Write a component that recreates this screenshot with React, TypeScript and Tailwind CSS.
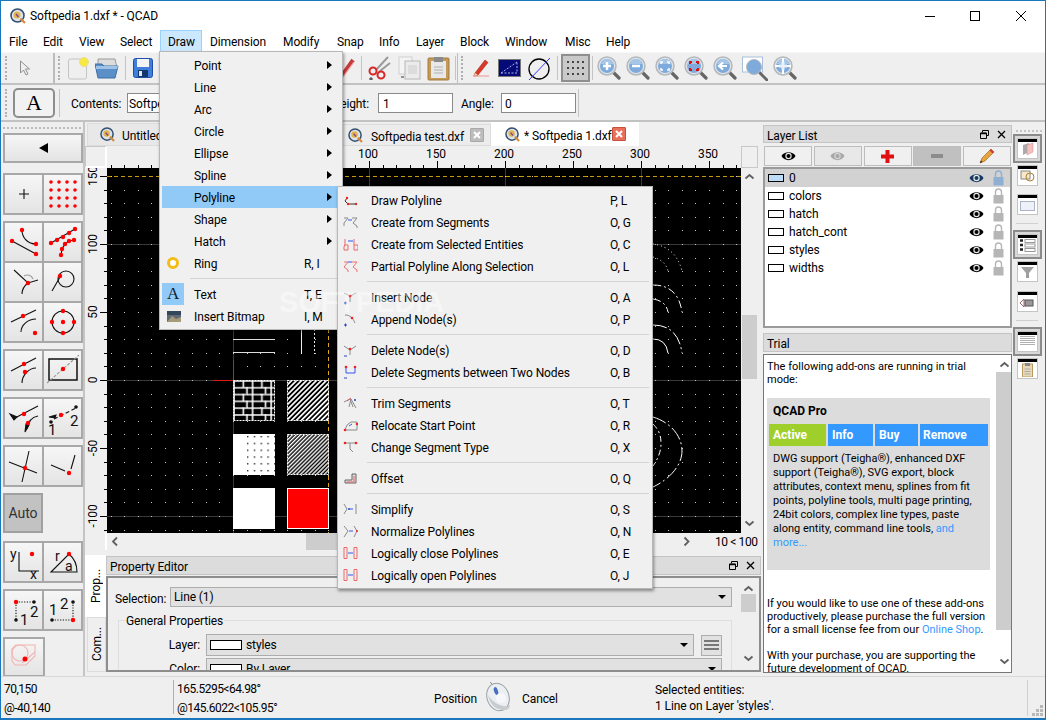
import type { ReactNode } from 'react'

const R = ({ x, y, r = 2.2 }: { x: number; y: number; r?: number }) => <circle cx={x} cy={y} r={r} fill="#f00" stroke="none" />

function Ico({ w = 34, h = 34, vb, children }: { w?: number; h?: number; vb?: string; children: ReactNode }) {
  return (
    <svg width={w} height={h} viewBox={vb ?? `0 0 ${w} ${h}`} fill="none" stroke="#111" strokeWidth="1.1" className="shrink-0">
      {children}
    </svg>
  )
}

/* ---------- small helpers ---------- */

function Handle({ className = '' }: { className?: string }) {
  return <div className={`w-[3px] h-[24px] shrink-0 border-l-2 border-dotted border-[#b0b0b0] ${className}`} />
}

function Sep({ className = '' }: { className?: string }) {
  return <div className={`w-px h-[24px] bg-[#c4c4c4] shrink-0 ${className}`} />
}

function Zoom({ children, className = '' }: { children?: ReactNode; className?: string }) {
  return (
    <svg width="24" height="24" viewBox="0 0 24 24" fill="none" className={`shrink-0 ${className}`}>
      <path d="M15 15l7 7" stroke="#666" strokeWidth="3.2" strokeLinecap="round" />
      <circle cx="10" cy="10" r="9" fill="#dfe4e8" stroke="#b4b8bc" strokeWidth="1.5" />
      <circle cx="10" cy="10" r="7" fill="#7fabdc" />
      <path d="M4 8a6 5 0 0112 0z" fill="#a6c6e8" />
      {children}
    </svg>
  )
}

function Eye({ faded = false, blue = false }: { faded?: boolean; blue?: boolean }) {
  const c = faded ? '#a8a8a8' : blue ? '#17395f' : '#000'
  return (
    <svg width="15" height="12" viewBox="0 0 15 12" className="shrink-0">
      <path d="M0.5 6C3 1 12 1 14.5 6 12 11.5 3 11.5 0.5 6z" fill={c} />
      <circle cx="7.5" cy="6" r="3.2" fill="#fff" opacity={faded ? 0.5 : 0.9} />
      <circle cx="7.5" cy="6" r="2" fill={c} />
    </svg>
  )
}

function Lock({ blue = false }: { blue?: boolean }) {
  const c = blue ? '#8fb0d2' : '#b6b6b6'
  return (
    <svg width="11" height="16" viewBox="0 0 11 16" fill="none" className="shrink-0">
      <path d="M2.5 7V4a3 3 0 016 0v3" stroke={c} strokeWidth="1.4" />
      <rect x="0.5" y="7" width="10" height="8.5" fill={c} />
    </svg>
  )
}

function DocIcon({ size = 15 }: { size?: number }) {
  return (
    <svg width={size} height={size} viewBox="0 0 16 16" className="shrink-0">
      <circle cx="7.5" cy="7.5" r="6.5" fill="#dbe3ec" stroke="#35506f" strokeWidth="1.6" />
      <circle cx="7" cy="7" r="3.5" fill="#e4b34b" />
      <path d="M6 6l2.5 3" stroke="#7c4a9e" strokeWidth="1.6" />
      <path d="M10.5 10.5l4.5 4.5" stroke="#d58a3a" strokeWidth="2.2" />
    </svg>
  )
}

function TabClose({ red = false }: { red?: boolean }) {
  return (
    <div className={`w-[14px] h-[14px] shrink-0 flex items-center justify-center rounded-[1px] border ${red ? 'bg-[#e8705a] border-[#c9503c]' : 'bg-[#bdbdbd] border-[#a8a8a8]'}`}>
      <svg width="8" height="8" viewBox="0 0 8 8"><path d="M1 1l6 6M7 1L1 7" stroke="#fff" strokeWidth="2" /></svg>
    </div>
  )
}

function Arrow({ d }: { d: 'up' | 'down' | 'left' | 'right' }) {
  const p = { up: 'M1.5 6.5L5.5 3l4 3.5', down: 'M1.5 3.5L5.5 7l4-3.5', left: 'M7 1.5L3 5.5l4 4', right: 'M3.5 1.5l4 4-4 4' }[d]
  return (
    <svg width="11" height="11" viewBox="0 0 11 11" fill="none" className="shrink-0">
      <path d={p} stroke="#606060" strokeWidth="1.8" />
    </svg>
  )
}

function DockBtns() {
  return (
    <div className="flex items-center gap-[8px]">
      <svg width="9" height="9" viewBox="0 0 9 9" fill="none" stroke="#000"><path d="M2.5 2.5V.5h6v5H6.5M.5 3h6v5.5h-6z" /><path d="M.5 3.5h6" strokeWidth="1.5" /></svg>
      <svg width="9" height="9" viewBox="0 0 9 9" fill="none" stroke="#000" strokeWidth="1.3"><path d="M1 1l7 7M8 1L1 8" /></svg>
    </div>
  )
}

function Combo({ children, className = '' }: { children?: ReactNode; className?: string }) {
  return (
    <div className={`bg-[#e1e1e1] border border-[#adadad] flex items-center pl-[3px] pr-[5px] ${className}`}>
      <div className="flex-1 flex items-center gap-[4px] min-w-0">{children}</div>
      <div className="w-0 h-0 border-l-[4px] border-r-[4px] border-t-[4px] border-l-transparent border-r-transparent border-t-black" />
    </div>
  )
}

/* ---------- menus ---------- */

const g = '#8a8a8a'
const menuIcons: Record<string, ReactNode> = {
  draw: <><path d="M4 5L2 8l3 3h8" stroke="#333" /><circle cx="4" cy="5" r="1.2" fill="#e22" stroke="none" /><circle cx="5" cy="11" r="1.2" fill="#e22" stroke="none" /><circle cx="13" cy="11" r="1.2" fill="#e22" stroke="none" /></>,
  seg: <><path d="M1 3h4L1 8v3M9 3h5l-4 5 4 3v2" stroke={g} /><path d="M5 5h4" stroke="#35e" /></>,
  sel: <><path d="M2 2v5L1 10v3h4V8H2M11 2v11h4V8h-4" stroke="#e66" /><path d="M5 4h5" stroke="#35e" /></>,
  part: <><path d="M1 3h4L1 8l4 3v2M9 3h5l-4 5 4 3v2" stroke="#f07070" /><path d="M5 3h4" stroke="#35e" /></>,
  ins: <><path d="M1 3l6 3 6-3M7 6v6" stroke={g} /><circle cx="7" cy="6" r="1.3" fill="#e22" stroke="none" /><path d="M1 13h3M2.5 11.500v3" stroke="#24c" /></>,
  app: <><path d="M2 3c5 0 8 3 10 8" stroke={g} /><circle cx="9" cy="6" r="1.3" fill="#e22" stroke="none" /><path d="M1 13h3M2.500 11.500v3" stroke="#24c" /></>,
  del: <><path d="M1 3l6 4 6-4M7 7v5" stroke={g} /><circle cx="7" cy="6" r="1.300" fill="#e22" stroke="none" /><path d="M1 13h3" stroke="#24c" /></>,
  dels: <><path d="M3 2v6h9V2" stroke="#35e" /><circle cx="3" cy="2" r="1.300" fill="#e22" stroke="none" /><circle cx="12" cy="2" r="1.300" fill="#e22" stroke="none" /><path d="M1 13h3" stroke="#24c" /></>,
  trim: <><path d="M1 6l6-3 3 8M6 11l2-8 5 9" stroke={g} /><path d="M4 5l4-3" stroke="#e55" /><circle cx="12" cy="4" r="1" fill="#24c" stroke="none" /></>,
  rel: <><path d="M2 12l2-5 4-3h6v8z" stroke={g} /><path d="M6 8l3-2" stroke="#35e" /><circle cx="2" cy="12" r="1.300" fill="#e22" stroke="none" /><circle cx="14" cy="6" r="1.300" fill="#e22" stroke="none" /></>,
  chg: <><path d="M2 3h11M7 3v6l3 3" stroke={g} /><circle cx="2" cy="3" r="1.300" fill="#e22" stroke="none" /><circle cx="13" cy="3" r="1.300" fill="#e22" stroke="none" /></>,
  off: <><path d="M2 12V9h7V3h4v9z" stroke="#666" fill="#ddd" /><path d="M4 12v-1h7V5" stroke="#e66" /></>,
  simp: <><path d="M1 2l3 5-3 5M13 2v10" stroke={g} /><path d="M6 7h4" stroke="#35e" /><circle cx="6" cy="7" r="1" fill="#35e" stroke="none" /></>,
  norm: <><path d="M1 2l4 5-4 6M11 2l3 5-3 6" stroke={g} /><path d="M6 7h4" stroke="#35e" /><circle cx="14" cy="7" r="1" fill="#e22" stroke="none" /></>,
  clo: <><path d="M1 1.500h3v11h-3zM11 1.500h3v11h-3z" stroke="#e66" /><path d="M5 7h5" stroke="#35e" /></>,
}

type Item = { label: string; key?: string; icon?: string } | 'sep'

const polyItems: Item[] = [
  { label: 'Draw Polyline', key: 'P, L', icon: 'draw' },
  { label: 'Create from Segments', key: 'O, G', icon: 'seg' },
  { label: 'Create from Selected Entities', key: 'O, C', icon: 'sel' },
  { label: 'Partial Polyline Along Selection', key: 'O, L', icon: 'part' },
  'sep',
  { label: 'Insert Node', key: 'O, A', icon: 'ins' },
  { label: 'Append Node(s)', key: 'O, P', icon: 'app' },
  'sep',
  { label: 'Delete Node(s)', key: 'O, D', icon: 'del' },
  { label: 'Delete Segments between Two Nodes', key: 'O, B', icon: 'dels' },
  'sep',
  { label: 'Trim Segments', key: 'O, T', icon: 'trim' },
  { label: 'Relocate Start Point', key: 'O, R', icon: 'rel' },
  { label: 'Change Segment Type', key: 'O, X', icon: 'chg' },
  'sep',
  { label: 'Offset', key: 'O, Q', icon: 'off' },
  'sep',
  { label: 'Simplify', key: 'O, S', icon: 'simp' },
  { label: 'Normalize Polylines', key: 'O, N', icon: 'norm' },
  { label: 'Logically close Polylines', key: 'O, E', icon: 'clo' },
  { label: 'Logically open Polylines', key: 'O, J', icon: 'clo' },
]

function DrawMenu() {
  const subs = ['Point', 'Line', 'Arc', 'Circle', 'Ellipse', 'Spline', 'Polyline', 'Shape', 'Hatch']
  return (
    <div className="absolute left-[159px] top-[51px] w-[184px] h-[279px] bg-[#f0f0f0] border border-[#b8b8b8] p-[2px] shadow-[1px_2px_3px_rgba(0,0,0,0.4)]">
      {subs.map((s) => (
        <div key={s} className={`h-[22px] flex items-center pl-[32px] pr-[8px] justify-between ${s === 'Polyline' ? 'bg-[#91c9f7]' : ''}`}>
          <span className="pt-[2px]">{s}</span>
          <span className="w-0 h-0 border-t-[4px] border-b-[4px] border-l-[5px] border-t-transparent border-b-transparent border-l-black" />
        </div>
      ))}
      <div className="h-[22px] flex items-center">
        <div className="w-[32px] flex justify-center pr-[11px]">
          <div className="w-[12px] h-[12px] rounded-full border-[3px] border-[#f4bc16] bg-[#fdfdfd]" />
        </div>
        <span className="w-[110px] pt-[2px]">Ring</span>
        <span className="pt-[2px]">R, I</span>
      </div>
      <div className="h-[9px] flex items-center pl-[28px]"><div className="h-px w-full bg-[#d4d4d4]" /></div>
      <div className="h-[22px] flex items-center">
        <div className="w-[22px] h-[22px] bg-[#91c9f7] flex items-center justify-center font-['Liberation_Serif',serif] text-[17px] text-[#123]">A</div>
        <span className="ml-[10px] w-[110px] pt-[2px]">Text</span>
        <span className="pt-[2px]">T, E</span>
      </div>
      <div className="h-[22px] flex items-center">
        <div className="w-[32px] flex justify-start pl-[5px]">
          <svg width="14" height="11" viewBox="0 0 14 11"><rect width="14" height="11" fill="#5f6a76" /><rect y="0" width="14" height="4" fill="#33475a" /><path d="M0 11l5-6 4 3 5-2v5z" fill="#a59a7a" /></svg>
        </div>
        <span className="w-[110px] pt-[2px]">Insert Bitmap</span>
        <span className="pt-[2px]">I, M</span>
      </div>
    </div>
  )
}

function PolyMenu() {
  return (
    <div className="absolute left-[337px] top-[186px] w-[316px] h-[403px] bg-[#f0f0f0] border border-[#b8b8b8] p-[2px] shadow-[1px_2px_3px_rgba(0,0,0,0.4)]">
      {polyItems.map((it, i) =>
        it === 'sep' ? (
          <div key={i} className="h-[9px] flex items-center pl-[27px] pr-[1px]"><div className="h-px w-full bg-[#d4d4d4]" /></div>
        ) : (
          <div key={i} className="h-[22px] flex items-center">
            <div className="w-[31px] pl-[3px]">
              <svg width="15" height="15" viewBox="0 0 15 15" fill="none" strokeWidth="1">{menuIcons[it.icon ?? 'seg']}</svg>
            </div>
            <span className="w-[239px] pt-[2px]">{it.label}</span>
            <span className="pt-[2px]">{it.key}</span>
          </div>
        ),
      )}
    </div>
  )
}

/* ---------- top bars ---------- */

const menuBar = [
  { name: 'File', w: 'w-[34px]' },
  { name: 'Edit', w: 'w-[36px]' },
  { name: 'View', w: 'w-[41px]' },
  { name: 'Select', w: 'w-[48px]' },
  { name: 'Draw', w: 'w-[42px]' },
  { name: 'Dimension', w: 'w-[73px]' },
  { name: 'Modify', w: 'w-[54px]' },
  { name: 'Snap', w: 'w-[42px]' },
  { name: 'Info', w: 'w-[37px]' },
  { name: 'Layer', w: 'w-[44px]' },
  { name: 'Block', w: 'w-[45px]' },
  { name: 'Window', w: 'w-[60px]' },
  { name: 'Misc', w: 'w-[41px]' },
  { name: 'Help', w: 'w-[40px]' },
]

function MainToolbar() {
  return (
    <div className="h-[33px] shrink-0 flex items-center bg-[#efefef] border-t border-[#f7f7f7] border-b-2 border-b-[#c2c2c2]">
      <Handle className="ml-[4px]" />
      <svg width="12" height="17" viewBox="0 0 12 17" className="ml-[11px] shrink-0"><path d="M1.5 1v12l3-3 2.500 5 2-1-2.500-5h4z" fill="#efefef" stroke="#909090" /></svg>
      <div className="w-[2px] h-[31px] bg-[#bdbdbd] ml-[22px] shrink-0" />
      <Handle className="ml-[3px]" />
      <svg width="23" height="24" viewBox="0 0 23 24" className="ml-[7px] shrink-0">
        <rect x="0.500" y="3" width="18" height="20" rx="2" fill="#efefef" stroke="#c4c4c4" />
        <circle cx="16" cy="6" r="4.500" fill="#f8e840" stroke="#e8e090" />
      </svg>
      <svg width="24" height="22" viewBox="0 0 24 22" className="ml-[4px] shrink-0">
        <path d="M3 2h17l2 9H3z" fill="#dcdcdc" stroke="#9a9a9a" />
        <path d="M0 7h7l2 2h14l-3 12H3z" fill="#5a8fc8" stroke="#3d6ea5" />
        <path d="M1 9h22l-1 3H1z" fill="#9fc3e6" />
      </svg>
      <Sep className="ml-[6px]" />
      <svg width="20" height="20" viewBox="0 0 20 20" className="ml-[7px] shrink-0">
        <rect x="0.500" y="0.500" width="19" height="19" rx="2" fill="#3f7fd9" stroke="#1f4fa8" />
        <rect x="4" y="1" width="12" height="8" fill="#f4f4f4" />
        <rect x="5" y="12" width="10" height="7" fill="#14366e" />
        <rect x="6" y="13" width="3" height="5" fill="#dfe8f6" />
      </svg>
      {/* this stretch is behind the open menus */}
      <div className="w-[186px] shrink-0" />
      <svg width="16" height="20" viewBox="0 0 16 20" className="shrink-0">
        <path d="M2 19L14 2" stroke="#c63a3a" strokeWidth="4" />
        <path d="M4 19L15 4" stroke="#efb0b0" strokeWidth="1.200" />
      </svg>
      <Sep className="ml-[6px]" />
      <svg width="23" height="24" viewBox="0 0 23 24" className="ml-[6px] shrink-0" fill="none">
        <path d="M8 14L20 1M12 15L22 7" stroke="#9a9a9a" strokeWidth="2" />
        <circle cx="5" cy="15" r="3.500" stroke="#d62828" strokeWidth="2" />
        <circle cx="13" cy="19" r="3.500" stroke="#d62828" strokeWidth="2" />
        <path d="M1 23h4M3 21v4" stroke="#333" />
      </svg>
      <svg width="23" height="24" viewBox="0 0 23 24" className="ml-[7px] shrink-0">
        <rect x="1" y="1" width="13" height="17" fill="#f4f4f4" stroke="#cfcfcf" />
        <rect x="7" y="5" width="15" height="18" fill="#ebebeb" stroke="#b8b8b8" />
        <rect x="10" y="9" width="9" height="9" fill="#dcdcdc" />
        <path d="M3 21h3" stroke="#333" />
      </svg>
      <svg width="23" height="25" viewBox="0 0 23 25" className="ml-[6px] shrink-0">
        <rect x="1" y="2" width="21" height="22" rx="1" fill="#c49a5a" stroke="#a57a3c" />
        <rect x="4" y="5" width="15" height="17" fill="#e8e8e8" />
        <rect x="7" y="1" width="9" height="5" fill="#8a8a8a" />
        <path d="M7 11h9M7 14h9M7 17h9" stroke="#b0b0b0" />
      </svg>
      <Sep className="ml-[5px]" />
      <div className="w-px h-[31px] bg-[#bdbdbd] ml-[1px] shrink-0" />
      <Handle className="ml-[3px]" />
      <svg width="18" height="20" viewBox="0 0 18 20" className="ml-[8px] shrink-0" fill="none">
        <path d="M1 18h16" stroke="#f2b0b0" strokeWidth="1.500" />
        <path d="M3 15L13 2l3 2.500L6 17l-4 1z" fill="#d83a2a" stroke="#a82a1a" strokeWidth="0.600" />
        <path d="M2 18l1-3 3 2z" fill="#f0d8b0" />
      </svg>
      <svg width="23" height="18" viewBox="0 0 23 18" className="ml-[8px] shrink-0">
        <rect x="0.500" y="0.500" width="22" height="17" fill="#050a78" stroke="#777" />
        <path d="M3 14L19 3M3 14h16V3" stroke="#a8b4e8" strokeDasharray="2 1.500" fill="none" />
      </svg>
      <svg width="23" height="23" viewBox="0 0 23 23" className="ml-[7px] shrink-0" fill="none">
        <circle cx="11" cy="12" r="10" stroke="#000" strokeWidth="1.300" />
        <path d="M1 23L22 1" stroke="#3a3af0" />
      </svg>
      <Sep className="ml-[6px]" />
      <div className="w-[29px] h-[28px] ml-[3px] shrink-0 bg-[#c9c9c9] border-2 border-[#8f8f8f] grid grid-cols-4 place-items-center px-[2px] py-[3px]">
        {Array.from({ length: 12 }).map((_, i) => <span key={i} className="w-[2px] h-[2px] bg-[#444]" />)}
      </div>
      <Sep className="ml-[2px]" />
      <Zoom className="ml-[4px]"><path d="M6 10h8M10 6v8" stroke="#fff" strokeWidth="2.500" /></Zoom>
      <Zoom className="ml-[5px]"><path d="M6 10h8" stroke="#fff" strokeWidth="2.500" /></Zoom>
      <Zoom className="ml-[5px]"><path d="M6 8V6h2M12 6h2v2M14 12v2h-2M8 14H6v-2" stroke="#fff" strokeWidth="1.500" /></Zoom>
      <Zoom className="ml-[5px]"><path d="M6 8V6h2M12 6h2v2M14 12v2h-2M8 14H6v-2" stroke="#e01010" strokeWidth="2" /></Zoom>
      <Zoom className="ml-[5px]"><path d="M14 10H7M10 6.500L6 10l4 3.500" stroke="#fff" strokeWidth="2.200" fill="none" /></Zoom>
      <svg width="26" height="25" viewBox="0 0 26 25" fill="none" className="ml-[5px] shrink-0">
        <rect x="0.500" y="1" width="20" height="15" fill="#fff" stroke="#a9bfdc" />
        <path d="M18 17l7 7" stroke="#666" strokeWidth="3" strokeLinecap="round" />
        <circle cx="12" cy="11" r="7.500" fill="#7fabdc" stroke="#b4b8bc" />
      </svg>
      <Zoom className="ml-[5px]"><path d="M10 2v16M2 10h16" stroke="#fff" strokeWidth="2" /><path d="M10 6v8M6 10h8" stroke="#e8f0fa" strokeWidth="3" /></Zoom>
    </div>
  )
}

function OptionsBar() {
  return (
    <div className="h-[37px] shrink-0 flex items-center bg-[#efefef] border-b-2 border-[#c2c2c2]">
      <Handle className="ml-[4px] h-[28px]" />
      <div className="ml-[5px] w-[42px] h-[30px] rounded-[5px] border-2 border-[#8e8e8e] bg-[#f2f2f2] flex items-center justify-center font-['Liberation_Serif',serif] text-[22px] shrink-0">A</div>
      <Sep className="ml-[4px] h-[28px]" />
      <span className="ml-[11px] w-[56px] pt-[2px] shrink-0">Contents:</span>
      <div className="w-[60px] h-[20px] bg-white border border-[#8a8a8a] pl-[1px] leading-[20px] overflow-hidden shrink-0">Softpedia</div>
      {/* behind the menus */}
      <div className="w-[142px] shrink-0" />
      <span className="w-[40px] pt-[2px] text-right shrink-0">eight:</span>
      <div className="ml-[9px] w-[75px] h-[20px] bg-white border border-[#8a8a8a] pl-[4px] leading-[20px] shrink-0">1</div>
      <span className="ml-[8px] w-[32px] pt-[2px] shrink-0">Angle:</span>
      <div className="ml-[8px] w-[75px] h-[20px] bg-white border border-[#8a8a8a] pl-[3px] leading-[20px] shrink-0">0</div>
      <Sep className="ml-[2px] h-[28px]" />
    </div>
  )
}

/* ---------- left tools ---------- */

function Cell({ children, off = false, className = '' }: { children?: ReactNode; off?: boolean; className?: string }) {
  return (
    <div className={`h-10 flex items-center justify-center border-l-2 border-t-2 border-[#a8a8a8] ${off ? 'bg-[#c6c6c6]' : 'bg-gradient-to-b from-[#f6f6f6] to-[#e4e4e4]'} ${className}`}>
      {children}
    </div>
  )
}

function Group({ children }: { children: ReactNode }) {
  return <div className="grid grid-cols-2 w-[80px] border-r-2 border-b-2 border-[#a8a8a8] shrink-0">{children}</div>
}

const T = ({ x, y, s = 14, children }: { x: number; y: number; s?: number; children: ReactNode }) => (
  <text x={x} y={y} fontSize={s} fill="#111" stroke="none" fontFamily="Roboto, sans-serif">{children}</text>
)

function LeftTools() {
  return (
    <div className="w-[84px] shrink-0 border-r-2 border-[#c4c4c4] flex flex-col pl-[2px] gap-[6px] overflow-hidden">
      <div className="h-[10px] mt-[1px] mb-[-6px] shrink-0 flex items-center"><div className="w-[78px] border-t-2 border-dotted border-[#bbb]" /></div>
      <div className="w-[80px] h-[30px] mb-[4px] border-2 border-[#a8a8a8] bg-gradient-to-b from-[#f6f6f6] to-[#e4e4e4] flex items-center justify-center shrink-0">
        <span className="w-0 h-0 border-t-[5px] border-b-[5px] border-r-[9px] border-t-transparent border-b-transparent border-r-black" />
      </div>
      <Group>
        <Cell><Ico w={12} h={12}><path d="M6 1v10M1 6h10" /></Ico></Cell>
        <Cell>
          <Ico>{[5, 13, 21, 29].flatMap((y) => [5, 13, 21, 29].map((x) => <R key={`${x}-${y}`} x={x} y={y} r={1.8} />))}</Ico>
        </Cell>
      </Group>
      <Group>
        <Cell><Ico><path d="M5 16l24 13M15 5c0 8 6 14 14 14" /><R x={5} y={16} /><R x={29} y={29} /><R x={15} y={5} /><R x={29} y={19} /></Ico></Cell>
        <Cell><Ico><path d="M5 18L29 4M28 15l-5 1-4 3-3 5-1 6" /><R x={5} y={18} /><R x={11} y={15} /><R x={17} y={12} /><R x={23} y={8} /><R x={29} y={4} /><R x={28} y={15} /><R x={23} y={16} /><R x={19} y={19} /><R x={16} y={24} /><R x={15} y={30} /></Ico></Cell>
        <Cell><Ico><path d="M7 5l14 13 10-3M21 18c-4 3-6 6-6 11" /><path d="M17 11a6 6 0 019 3" stroke="#999" /><R x={21} y={18} /></Ico></Cell>
        <Cell><Ico><circle cx="20" cy="14" r="8" /><path d="M6 26l8-14" /><R x={14} y={11} /></Ico></Cell>
        <Cell><Ico><path d="M4 17L29 5M14 27c0-7 7-13 15-13" /><R x={16} y={11} /><R x={28} y={28} /></Ico></Cell>
        <Cell><Ico><circle cx="17" cy="17" r="11" /><R x={17} y={6} /><R x={17} y={28} /><R x={6} y={17} /><R x={28} y={17} /><R x={17} y={17} /></Ico></Cell>
      </Group>
      <Group>
        <Cell><Ico><path d="M4 18L29 5M15 30c0-8 7-15 14-15" /><R x={17} y={11} /><R x={18} y={19} /></Ico></Cell>
        <Cell><Ico><rect x="3" y="6" width="28" height="21" strokeWidth="1.500" /><path d="M1 30L33 2" stroke="#999" strokeDasharray="3 1.500" /><R x={17} y={16} /></Ico></Cell>
      </Group>
      <Group>
        <Cell><Ico><path d="M6 18L31 5M20 28c1-7 5-12 11-13" /><path d="M3 13l7 3-3 3zM18 31l1-8 3 1z" fill="#111" /><R x={17} y={13} /><R x={21} y={22} /></Ico></Cell>
        <Cell>
          <Ico>
            <path d="M8 18l22-11" strokeDasharray="4 2.500" />
            <path d="M3 16l7-2-1 3z" fill="#111" />
            <R x={15} y={14} />
            <circle cx="30" cy="6" r="1.800" fill="#111" stroke="none" />
            <circle cx="5" cy="21" r="1.800" fill="#111" stroke="none" />
            <T x={24} y={25} s={15}>2</T>
            <T x={2} y={34} s={15}>1</T>
          </Ico>
        </Cell>
      </Group>
      <Group>
        <Cell><Ico><path d="M2 13l28 11M22 2l-7 31" /><R x={18} y={19} /></Ico></Cell>
        <Cell><Ico><path d="M5 16l14 6M29 6l-4 14" /><R x={23} y={24} /></Ico></Cell>
      </Group>
      <div className="w-[40px] h-[40px] mb-[2px] bg-[#c2c2c2] border-2 border-[#a0a0a0] flex items-center justify-center text-[14px] text-[#333] shrink-0">Auto</div>
      <Group>
        <Cell><Ico><path d="M12 7v19h20" /><T x={3} y={14} s={14}>y</T><T x={23} y={34} s={14}>x</T><R x={25} y={9} /></Ico></Cell>
        <Cell><Ico><path d="M5 27L23 9c6 5 8 11 8 18zM5 27h26" /><T x={9} y={16} s={14}>r</T><T x={19} y={26} s={14}>a</T><R x={23} y={9} /></Ico></Cell>
      </Group>
      <Group>
        <Cell>
          <Ico>
            <path d="M9 9h18M9 9v18" strokeDasharray="1.200 1.500" />
            <R x={9} y={9} />
            <circle cx="27" cy="9" r="1.800" fill="#111" stroke="none" />
            <circle cx="9" cy="27" r="1.800" fill="#111" stroke="none" />
            <T x={23} y={24} s={15}>2</T>
            <T x={13} y={32} s={15}>1</T>
          </Ico>
        </Cell>
        <Cell>
          <Ico>
            <path d="M6 27h21M27 9v18" strokeDasharray="1.200 1.500" />
            <R x={27} y={27} />
            <circle cx="27" cy="9" r="1.800" fill="#111" stroke="none" />
            <circle cx="6" cy="27" r="1.800" fill="#111" stroke="none" />
            <T x={14} y={16} s={15}>2</T>
            <T x={3} y={22} s={15}>1</T>
          </Ico>
        </Cell>
      </Group>
      <div className="w-[42px] h-10 border-2 border-[#a8a8a8] bg-gradient-to-b from-[#f6f6f6] to-[#e4e4e4] flex items-center justify-center shrink-0">
        <Ico><path d="M9 5h19v11l-9 9H8l-3-4V9z" stroke="#f2b4b4" /><circle cx="13" cy="13" r="8" stroke="#f2b4b4" /><path d="M15 23l13-11" stroke="#f2b4b4" /><R x={18} y={19} r={2.500} /></Ico>
      </div>
    </div>
  )
}

/* ---------- canvas ---------- */

const X0 = 233 - 107
const Y0 = 381 - 169

function Canvas() {
  const dots = []
  for (let i = -10; i < 40; i++) {
    for (let j = -16; j < 14; j++) {
      const x = Math.round(X0 + i * 13.6)
      const y = Math.round(Y0 + j * 13.6)
      if (x > 0 && x < 634 && y > 0 && y < 365) dots.push(<rect key={`${i}_${j}`} x={x} y={y} width="1" height="1" fill="#c8c8c8" />)
    }
  }
  return (
    <svg width="634" height="365" viewBox="0 0 634 365" className="shrink-0 bg-black block">
      <defs>
        <pattern id="diag" width="3.500" height="3.500" patternUnits="userSpaceOnUse" patternTransform="rotate(-45)">
          <rect width="3.500" height="3.500" fill="#000" />
          <rect width="3.500" height="1.700" fill="#fff" />
        </pattern>
        <pattern id="diag2" width="2.800" height="2.800" patternUnits="userSpaceOnUse" patternTransform="rotate(-45)">
          <rect width="2.800" height="2.800" fill="#000" />
          <rect width="2.800" height="1.400" fill="#fff" />
        </pattern>
        <pattern id="cross" width="18.600" height="13.600" patternUnits="userSpaceOnUse" x={X0} y={Y0}>
          <path d="M0 1h18.600M0 7.800h18.600M1 0v13.600M10.300 0v7" stroke="#fff" strokeWidth="1.600" />
          <path d="M14 7v7" stroke="#fff" strokeWidth="1.600" />
        </pattern>
        <pattern id="dotsw" width="6.800" height="6.800" patternUnits="userSpaceOnUse" x={X0 + 12} y={Y0 + 54}>
          <rect width="6.800" height="6.800" fill="#fff" />
          <rect x="2" y="2" width="1.300" height="1.300" fill="#000" />
        </pattern>
      </defs>
      {[X0 + 136, X0 + 272, X0 + 408].map((x) => <path key={x} d={`M${x + 0.5} 0v365`} stroke="#3a3a3a" />)}
      <path d={`M${X0 + 0.5} 0v365`} stroke="#3a3a3a" />
      {[Y0 - 136, Y0, Y0 + 136].map((y) => <path key={y} d={`M0 ${y + 0.5}h634`} stroke="#3a3a3a" />)}
      {dots}
      <path d="M0 8.500h634" stroke="#c89a10" strokeDasharray="4 3" />
      <path d={`M${X0 + 95.5} 0v365`} stroke="#e0a818" strokeDasharray="4 3" />
      <path d={`M${X0} 171.500h42M${X0} 184.500h42`} stroke="#ddd" />
      <path d={`M${X0 + 68.5} 161v25`} stroke="#eee" />
      <path d={`M${X0 + 81.5} 161v25`} stroke="#eee" strokeDasharray="2 2" />
      <path d={`M${X0 + 0.5} ${Y0 - 20}v20M${X0 - 20} ${Y0 + 0.5}h20`} stroke="#e01818" />
      <rect x={X0 + 0.5} y={Y0 + 0.5} width="41" height="40" fill="url(#cross)" stroke="#fff" strokeDasharray="2 1" />
      <rect x={X0 + 54.5} y={Y0 + 0.5} width="41" height="40" fill="url(#diag)" stroke="#fff" strokeDasharray="2 1" />
      <rect x={X0} y={Y0 + 54} width="42" height="41" fill="url(#dotsw)" />
      <rect x={X0} y={Y0 + 54} width="14" height="41" fill="#fff" />
      <rect x={X0 + 54.5} y={Y0 + 54.5} width="41" height="40" fill="url(#diag2)" stroke="#fff" strokeDasharray="2 1" />
      <rect x={X0} y={Y0 + 108} width="42" height="41" fill="#fff" />
      <rect x={X0 + 54.5} y={Y0 + 108.5} width="41" height="40" fill="#f00" stroke="#fff" />
      <g fill="none" stroke="#fff" transform="translate(-107 -169)">
        <path d="M653 245Q676 248 682 272" strokeDasharray="1 3" />
        <path d="M653 258Q666 262 668 272" strokeDasharray="1 3" />
        <path d="M653 286Q678 286 682 313" strokeDasharray="8 3 2 3" />
        <path d="M653 300Q666 302 668 313" strokeDasharray="8 3 2 3" />
        <path d="M653 326Q678 326 682 354" strokeDasharray="14 3 2 3" />
        <path d="M653 340Q666 340 668 354" />
        <path d="M653 418C672 424 682 438 682 452 682 466 670 480 653 488" strokeDasharray="14 3 2 3" />
        <path d="M653 425C660 432 661 438 661 445 661 452 658 460 653 467" strokeDasharray="6 3 2 3" />
      </g>
    </svg>
  )
}

function HRuler() {
  const ticks = []
  for (let i = -10; i < 38; i++) {
    const x = Math.round(X0 + i * 13.6) + 0.5
    if (x > 0 && x < 634) ticks.push(<path key={i} d={i % 5 === 0 ? `M${x} 15v7` : `M${x} 19v3`} stroke="#000" />)
  }
  const labels = [100, 150, 200, 250, 300, 350]
  return (
    <svg width="634" height="22" viewBox="0 0 634 22" className="shrink-0 block">
      {ticks}
      {labels.map((l) => (
        <text key={l} x={X0 + l * 1.36 - 1} y="12" fontSize="12" textAnchor="middle" fill="#000" fontFamily="Roboto, sans-serif">{l}</text>
      ))}
    </svg>
  )
}

function VRuler() {
  const ticks = []
  for (let j = -16; j < 13; j++) {
    const y = Math.round(Y0 + j * 13.6) + 0.5
    if (y > 0 && y < 365) ticks.push(<path key={j} d={j % 5 === 0 ? `M15 ${y}h7` : `M19 ${y}h3`} stroke="#000" />)
  }
  const labels = [150, 100, 50, 0, -50, -100]
  return (
    <svg width="22" height="365" viewBox="0 0 22 365" className="shrink-0 block">
      {ticks}
      {labels.map((l) => (
        <text key={l} transform={`translate(12 ${Y0 - l * 1.36}) rotate(-90)`} fontSize="12" textAnchor="middle" fill="#000" fontFamily="Roboto, sans-serif">{l}</text>
      ))}
    </svg>
  )
}

function CenterColumn() {
  return (
    <div className="w-[676px] shrink-0 flex flex-col">
      {/* document tabs */}
      <div className="h-[24px] flex items-end shrink-0 whitespace-nowrap">
        <div className="ml-[2px] w-[252px] h-[23px] bg-[#e8e8e8] border border-[#dcdcdc] flex items-center pl-[12px] gap-[7px] shrink-0">
          <DocIcon /><span className="pt-[3px]">Untitled</span>
        </div>
        <div className="w-[152px] h-[22px] bg-[#ececec] border border-[#dcdcdc] flex items-center pl-[8px] gap-[8px] shrink-0">
          <DocIcon /><span className="w-[91px] pt-[3px] shrink-0">Softpedia test.dxf</span><TabClose />
        </div>
        <div className="w-[148px] h-[24px] bg-white flex items-center pl-[14px] gap-[4px] shrink-0">
          <DocIcon /><span className="w-[84px] pt-[3px] shrink-0">* Softpedia 1.dxf</span><TabClose red />
        </div>
      </div>
      {/* rulers + drawing */}
      <div className="h-[22px] flex shrink-0">
        <div className="w-[22px] h-[22px] bg-[#efefef] border-r-2 border-b-2 border-white border-t border-t-[#c8c8c8] border-l border-l-[#c8c8c8] shrink-0" />
        <HRuler />
        <div className="w-[17px] h-[22px] border border-[#c8c8c8] shrink-0" />
      </div>
      <div className="h-[365px] flex shrink-0">
        <VRuler />
        <Canvas />
        <div className="w-[17px] flex flex-col items-center justify-between py-[4px] relative shrink-0">
          <Arrow d="up" />
          <div className="absolute left-[1px] top-[147px] w-[15px] h-[64px] bg-[#cdcdcd]" />
          <Arrow d="down" />
        </div>
      </div>
      <div className="h-[17px] flex items-center shrink-0">
        <div className="w-[22px] h-[17px] border-r-2 border-white shrink-0" />
        <div className="w-[588px] h-full flex items-center justify-between px-[3px] relative shrink-0">
          <Arrow d="left" />
          <div className="absolute left-[199px] top-0 w-[50px] h-[17px] bg-[#cdcdcd]" />
          <Arrow d="right" />
        </div>
        <span className="ml-[20px] whitespace-nowrap tracking-[-0.4px]">10 &lt; 100</span>
      </div>
      <div className="h-[5px] shrink-0" />
      {/* property editor */}
      <div className="flex-1 flex min-h-0">
        <div className="w-[21px] shrink-0 flex flex-col">
          <div className="h-[62px] bg-white flex items-center justify-center">
            <span className="[writing-mode:vertical-rl] rotate-180">Prop...</span>
          </div>
          <div className="h-[55px] ml-[2px] border border-[#dcdcdc] flex items-center justify-center">
            <span className="[writing-mode:vertical-rl] rotate-180">Com...</span>
          </div>
        </div>
        <div className="flex-1 flex flex-col min-w-0 pt-[1px]">
          <div className="h-[19px] bg-[#dcdcdc] border border-[#c4c4c4] flex items-center justify-between pl-[3px] pr-[5px] shrink-0">
            <span className="pt-[2px]">Property Editor</span>
            <DockBtns />
          </div>
          <div className="h-[96px] mt-[1px] shrink-0 border-2 border-[#8d8d8d] flex overflow-hidden">
            <div className="w-[632px] shrink-0 pl-[7px] pt-[9px]">
              <div className="flex items-center">
                <span className="w-[55px] shrink-0 pt-[3px]">Selection:</span>
                <Combo className="w-[562px] h-[20px]">Line (1)</Combo>
              </div>
              <div className="ml-[3px] mt-[13px] w-[614px] border border-[#dedede] h-[80px] relative shrink-0">
                <span className="absolute left-[6px] top-[-7px] bg-[#efefef] px-px leading-[14px]">General Properties</span>
                <div className="mt-[13px] flex items-center">
                  <span className="w-[81px] text-right shrink-0">Layer:</span>
                  <Combo className="ml-[6px] w-[488px] h-[22px] shrink-0"><span className="w-[32px] h-[10px] bg-white border border-black shrink-0" /> styles</Combo>
                  <div className="ml-[7px] w-[21px] h-[21px] border border-[#adadad] bg-[#e1e1e1] flex flex-col justify-center gap-[2px] px-[2px] shrink-0">
                    <span className="h-[2px] bg-[#777]" /><span className="h-[2px] bg-[#777]" /><span className="h-[2px] bg-[#777]" />
                  </div>
                </div>
                <div className="mt-[2px] flex items-center">
                  <span className="w-[81px] text-right shrink-0">Color:</span>
                  <Combo className="ml-[6px] w-[516px] h-[22px] shrink-0"><span className="w-[32px] h-[10px] bg-white border border-black shrink-0" /> By Layer</Combo>
                </div>
              </div>
            </div>
            <div className="w-[17px] shrink-0 flex flex-col items-center justify-between py-[6px] relative">
              <Arrow d="up" />
              <div className="absolute left-[1px] top-[16px] w-[15px] h-[18px] bg-[#cdcdcd]" />
              <Arrow d="down" />
            </div>
          </div>
        </div>
      </div>
    </div>
  )
}

/* ---------- right side ---------- */

const layers = ['0', 'colors', 'hatch', 'hatch_cont', 'styles', 'widths']

function LayerPanel() {
  const btn = 'h-[20px] w-[48px] border border-[#bdbdbd] flex items-center justify-center shrink-0'
  return (
    <>
      <div className="h-[18px] bg-[#dcdcdc] border border-[#c4c4c4] flex items-center justify-between pl-[3px] pr-[5px] shrink-0">
        <span className="pt-[3px]">Layer List</span>
        <DockBtns />
      </div>
      <div className="flex justify-between px-px mt-[3px] shrink-0">
        <div className={`${btn} bg-[#f0f0f0]`}><Eye /></div>
        <div className={`${btn} bg-[#e8e8e8]`}><Eye faded /></div>
        <div className={`${btn} bg-[#f0f0f0]`}>
          <svg width="13" height="13" viewBox="0 0 13 13"><path d="M4.500 0h4v4.500H13v4H8.500V13h-4V8.500H0v-4h4.500z" fill="#e01010" /></svg>
        </div>
        <div className={`${btn} bg-[#c0c0c0]`}><span className="w-[12px] h-[4px] bg-[#8c8c8c]" /></div>
        <div className={`${btn} bg-[#f0f0f0]`}>
          <svg width="16" height="16" viewBox="0 0 16 16"><path d="M1 15l2-5L12 1l3 3-9 9z" fill="#e8a33c" stroke="#8a6020" strokeWidth="0.600" /><path d="M12 1l3 3-1.500 1.500-3-3z" fill="#d83a3a" /><path d="M1 15l1-2.500L3.500 14z" fill="#222" /></svg>
        </div>
      </div>
      <div className="h-[161px] mt-[1px] bg-white border-2 border-[#9a9a9a] shrink-0">
        {layers.map((l, i) => (
          <div key={l} className={`h-[18px] flex items-center pr-[6px] ${i === 0 ? 'bg-[#d2d2d2]' : ''}`}>
            <span className={`ml-[3px] w-[16px] h-[8px] border border-black shrink-0 ${i === 0 ? 'bg-[#bcdcf8]' : 'bg-white'}`} />
            <span className="ml-[5px] flex-1">{l}</span>
            <Eye blue={i === 0} />
            <span className="ml-[9px]"><Lock blue={i === 0} /></span>
          </div>
        ))}
      </div>
    </>
  )
}

function TrialPanel() {
  const link = 'text-[#3399ff]'
  return (
    <>
      <div className="h-[19px] mt-[5px] bg-[#dcdcdc] border border-[#c4c4c4] flex items-center pl-[3px] pt-[2px] shrink-0">Trial</div>
      <div className="h-[319px] mt-[2px] bg-white border border-[#777] flex overflow-hidden shrink-0">
        <div className="w-[231px] shrink-0 pl-[3px] pt-[5px] leading-[13px] text-[11px] tracking-normal">
          <p className="w-[205px]">The following add-ons are running in trial mode:</p>
          <div className="mt-[12px] w-[223px] h-[172px] bg-[#dcdcdc] pt-[6px]">
            <div className="ml-[6px] font-bold text-[12px] leading-[14px]">QCAD Pro</div>
            <div className="mt-[6px] ml-[2px] flex gap-[2px] font-bold text-white text-[12px]">
              <span className="w-[57px] h-[22px] bg-[#9fcf2b] pl-[4px] leading-[22px]">Active</span>
              <span className="w-[45px] h-[22px] bg-[#3399ff] pl-[4px] leading-[22px]">Info</span>
              <span className="w-[43px] h-[22px] bg-[#3399ff] pl-[4px] leading-[22px]">Buy</span>
              <span className="w-[68px] h-[22px] bg-[#3399ff] pl-[3px] leading-[22px]">Remove</span>
            </div>
            <p className="mt-[6px] pl-[6px] pr-[14px] leading-[14px]">
              DWG support (Teigha®), enhanced DXF support (Teigha®), SVG export, block attributes, context menu, splines from fit points, polyline tools, multi page printing, 24bit colors, complex line types, paste along entity, command line tools, <span className={link}>and more...</span>
            </p>
          </div>
          <p className="mt-[27px] w-[225px]">
            If you would like to use one of these add-ons productively, please purchase the full version for a small license fee from our <span className={link}>Online Shop</span>.
          </p>
          <p className="mt-[13px] w-[225px]">With your purchase, you are supporting the future development of QCAD.</p>
        </div>
        <div className="w-[16px] ml-[1px] shrink-0 flex flex-col items-center justify-between py-[5px] relative">
          <Arrow d="up" />
          <div className="absolute left-0 top-[17px] w-[15px] h-[258px] bg-[#cdcdcd]" />
          <Arrow d="down" />
        </div>
      </div>
    </>
  )
}

function DockTile({ active = false, children }: { active?: boolean; children?: ReactNode }) {
  const tile = (
    <div className="w-[21px] h-[21px] bg-white border border-[#c4c4c4] relative flex items-center justify-center overflow-hidden shrink-0">
      <div className="absolute left-0 right-0 top-0 h-[3px] bg-black" />
      {children}
    </div>
  )
  return active ? (
    <div className="w-[29px] h-[29px] bg-[#d8d8d8] border-2 border-[#8a8a8a] flex items-center justify-center shrink-0">{tile}</div>
  ) : (
    <div className="w-[29px] flex justify-center shrink-0 py-[2px]">{tile}</div>
  )
}

function DockStrip() {
  return (
    <div className="w-[32px] shrink-0 flex flex-col pl-px">
      <div className="h-[9px] flex items-end justify-center mb-[2px] mt-[1px]"><div className="w-[26px] border-t-2 border-dotted border-[#c4c4c4]" /></div>
      <DockTile active><svg width="15" height="14" viewBox="0 0 15 14"><path d="M3 3l6-2v9l-6 3z" fill="#aaa" /><path d="M7 3l6-2v9l-6 3z" fill="#f6c0c0" stroke="#c88" strokeWidth="0.500" /></svg></DockTile>
      <DockTile><svg width="15" height="14" viewBox="0 0 15 14" fill="none"><rect x="1" y="2" width="9" height="8" fill="#f4e8c8" stroke="#888" /><circle cx="10" cy="8" r="4" stroke="#b08030" /></svg></DockTile>
      <div className="h-[4px] shrink-0" />
      <DockTile><div className="w-[15px] h-[10px] mt-[2px] bg-[#eef2f8] border border-[#aab4c4]" /></DockTile>
      <div className="h-px w-[22px] ml-[3px] my-[6px] bg-[#d0d0d0] shrink-0" />
      <DockTile active>
        <svg width="16" height="13" viewBox="0 0 16 13" fill="none" className="mt-[2px]"><path d="M0 1.500h3M0 6h3M0 10.500h3" stroke="#222" strokeWidth="2.500" /><rect x="5" y="0.500" width="10" height="3" stroke="#999" /><rect x="5" y="5" width="10" height="3" stroke="#999" /><rect x="5" y="9.500" width="10" height="3" stroke="#999" /></svg>
      </DockTile>
      <DockTile><svg width="13" height="13" viewBox="0 0 13 13" className="mt-[2px]"><path d="M0 1h13L8 7v5H5V7z" fill="#a0a0a0" /></svg></DockTile>
      <div className="h-[5px] shrink-0" />
      <DockTile><svg width="15" height="12" viewBox="0 0 15 12" className="mt-[2px]"><path d="M0 6l4-4v8z" fill="none" stroke="#a66" /><rect x="5" y="3" width="8" height="6" fill="#999" stroke="#555" /></svg></DockTile>
      <div className="h-px w-[22px] ml-[3px] my-[6px] bg-[#d0d0d0] shrink-0" />
      <DockTile active>
        <div className="w-[15px] h-[14px] mt-[2px] flex flex-col gap-px">
          {[0, 1, 2, 3, 4].map((i) => <span key={i} className="h-px bg-[#b0b0b0]" />)}
        </div>
      </DockTile>
      <DockTile><svg width="11" height="14" viewBox="0 0 11 14" className="mt-[2px]"><rect x="0.500" y="1" width="10" height="13" fill="#e8d8b8" stroke="#b89a60" /><rect x="3" y="0" width="5" height="3" fill="#888" /><path d="M2.500 6h6M2.500 8.500h6M2.500 11h6" stroke="#aaa" /></svg></DockTile>
    </div>
  )
}

function StatusBar() {
  return (
    <div className="h-[42px] shrink-0 flex border-t border-[#d8d8d8] pt-[3px] relative">
      <div className="w-[172px] pl-[3px] shrink-0 flex flex-col justify-between pb-[2px] pt-[1px] tracking-[-0.5px]">
        <span>70,150</span>
        <span>@-40,140</span>
      </div>
      <div className="w-px h-[34px] bg-[#b0b0b0] shrink-0" />
      <div className="w-[260px] pl-[3px] shrink-0 flex flex-col justify-between pb-[2px] pt-[1px] tracking-[-0.5px]">
        <span>165.5295&lt;64.98°</span>
        <span>@145.6022&lt;105.95°</span>
      </div>
      <div className="flex items-center shrink-0 pb-[5px]">
        <span className="w-[51px] pt-[4px] shrink-0">Position</span>
        <svg width="27" height="31" viewBox="0 0 27 31" className="shrink-0">
          <path d="M5 1l3 3" stroke="#888" />
          <ellipse cx="13" cy="16" rx="11" ry="14" transform="rotate(-18 13 16)" fill="#eceff2" stroke="#9aa0a6" />
          <path d="M3 14c2 10 8 15 16 15 4 0 6-2 6-5-3 3-15 1-22-10z" fill="#c8ccd0" />
          <ellipse cx="11" cy="10" rx="2" ry="4" transform="rotate(-18 11 10)" fill="#4a6fc0" />
          <circle cx="16" cy="17" r="5" fill="#f6f7f8" />
        </svg>
        <span className="ml-[10px] w-[133px] pt-[4px] shrink-0">Cancel</span>
      </div>
      <div className="flex flex-col leading-[16px] shrink-0 pt-[2px]">
        <span>Selected entities:</span>
        <span>1 Line on Layer 'styles'.</span>
      </div>
      <div className="absolute right-[17px] top-[3px] w-px h-[36px] bg-[#d0d0d0]" />
      <div className="absolute right-[2px] bottom-[2px] grid grid-cols-3 gap-px w-[11px] h-[11px]">
        {[0, 0, 1, 0, 1, 1, 1, 1, 1].map((v, i) => <span key={i} className={v ? 'bg-[#b8b8b8]' : ''} />)}
      </div>
    </div>
  )
}

export default function App() {
  return (
    <div className="relative w-[1046px] h-[720px] overflow-hidden flex flex-col border border-[#1a76bd] border-b-2 bg-[#efefef] font-['Roboto',sans-serif] text-[12px] leading-[16px] tracking-[-0.1px] text-black">
      {/* title bar */}
      <div className="h-[29px] shrink-0 bg-white flex items-center pl-[9px] pt-[1px]">
        <DocIcon size={16} />
        <span className="ml-[4px]">Softpedia 1.dxf * - QCAD</span>
        <div className="ml-auto flex items-center">
          <div className="w-[10px] h-px bg-black mr-[35px]" />
          <div className="w-[10px] h-[10px] border border-black mr-[36px]" />
          <svg width="10" height="10" viewBox="0 0 10 10" className="mr-[19px]"><path d="M0 0l10 10M10 0L0 10" stroke="#000" /></svg>
        </div>
      </div>
      {/* menu bar */}
      <div className="h-[22px] shrink-0 bg-white flex items-stretch">
        {menuBar.map((m) => (
          <div key={m.name} className={`${m.w} shrink-0 flex items-center pt-[1px] ${m.name === 'Draw' ? 'pl-[7px] bg-[#cce8ff] border border-[#99d1ff]' : 'pl-[8px]'}`}>{m.name}</div>
        ))}
      </div>
      <MainToolbar />
      <OptionsBar />
      {/* main area */}
      <div className="flex-1 flex min-h-0">
        <LeftTools />
        <CenterColumn />
        <div className="w-[249px] ml-[2px] pt-[3px] shrink-0 flex flex-col">
          <LayerPanel />
          <TrialPanel />
        </div>
        <DockStrip />
      </div>
      <StatusBar />
      {/* open menus */}
      <div className="absolute -left-px -top-px w-[1046px] h-[720px] pointer-events-none">
        <DrawMenu />
        <PolyMenu />
        <div className="absolute left-[279px] top-[285px] font-['Liberation_Sans',sans-serif] font-bold text-[29px] leading-[34px] text-white/45">SOFTPEDIA</div>
      </div>
    </div>
  )
}
